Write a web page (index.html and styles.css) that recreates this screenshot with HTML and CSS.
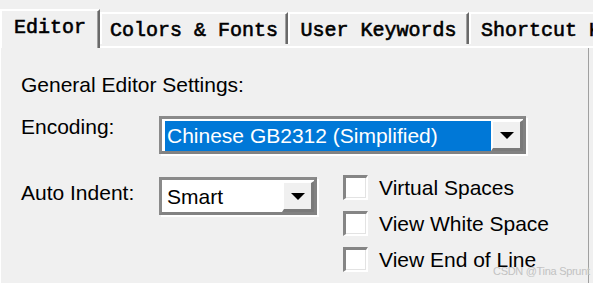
FILE: index.html
```html
<!DOCTYPE html>
<html>
<head>
<meta charset="utf-8">
<link rel="stylesheet" href="styles.css">
</head>
<body>
<div class="dialog">
  <div class="tabs">
    <div class="tab active">Editor</div>
    <div class="tab-rest">
      <div class="tab w-colors">Colors &amp; Fonts</div>
      <div class="tab w-user">User Keywords</div>
      <div class="tab w-short">Shortcut Keys</div>
    </div>
  </div>
  <div class="panel">
    <div class="heading">General Editor Settings:</div>
    <div class="row row-enc">
      <div class="label">Encoding:</div>
      <div class="combo combo-enc">
        <div class="field selected">Chinese GB2312 (Simplified)</div>
        <div class="drop"><span class="arrow"></span></div>
      </div>
    </div>
    <div class="row row-indent">
      <div class="label label-ai">Auto Indent:</div>
      <div class="combo combo-ai">
        <div class="field">Smart</div>
        <div class="drop"><span class="arrow"></span></div>
      </div>
      <div class="checks">
        <div class="check"><span class="box"></span><span class="check-label">Virtual Spaces</span></div>
        <div class="check"><span class="box"></span><span class="check-label">View White Space</span></div>
        <div class="check"><span class="box"></span><span class="check-label">View End of Line</span></div>
      </div>
    </div>
  </div>
  <div class="watermark">CSDN @Tina Sprunt</div>
</div>
</body>
</html>
```
FILE: styles.css
```css
* { box-sizing: border-box; }
html, body { margin: 0; padding: 0; }
body {
  background: #f0f0f0;
  width: 593px;
  height: 283px;
  overflow: hidden;
  font-family: "Liberation Sans", Arial, sans-serif;
  font-size: 21px;
  color: #000;
}
.dialog {
  width: 593px;
  height: 283px;
  overflow: hidden;
  position: relative;
}
.tabs {
  display: flex;
  height: 48px;
}
.tab {
  font-family: "Liberation Mono", "Courier New", monospace;
  font-size: 20px;
  line-height: 20px;
  font-weight: normal;
  -webkit-text-stroke: 0.6px #000;
  white-space: nowrap;
  background: #f0f0f0;
  border-top: 2px solid #fff;
  border-left: 2px solid #fff;
  border-right: 2px solid #696969;
  box-shadow: inset -1px 0 0 #a0a0a0;
  padding-top: 7px;
  text-align: center;
  flex: none;
}
.tab.active {
  width: 100px;
  margin-top: 9px;
  height: 39px;
}
.tab-rest {
  flex: 1;
  min-width: 0;
  display: flex;
  align-items: flex-start;
  padding-top: 12px;
  height: 48px;
  border-bottom: 2px solid #fff;
  overflow: hidden;
}
.tab-rest .tab { height: 32px; }
.w-colors { width: 188px; }
.w-user { width: 181px; }
.w-short {
  width: 200px;
  text-align: left;
  padding-left: 10px;
  border-right: none;
  box-shadow: none;
}
.panel {
  height: 235px;
  width: 589px;
  border-left: 1px solid #fff;
  border-right: 1px solid #a0a0a0;
  padding: 25px 0 0 20px;
}
.heading {
  line-height: 24px;
  height: 24px;
  white-space: nowrap;
}
.row {
  display: flex;
  align-items: flex-start;
}
.row-enc { margin-top: 18px; }
.row-indent { margin-top: 21px; }
.label {
  width: 138px;
  line-height: 24px;
  flex: none;
  white-space: nowrap;
}
.label-ai { margin-top: 6px; }
.combo {
  display: flex;
  flex: none;
  height: 38px;
  border: 3px solid #828282;
  border-top-color: #8a8a8a;
  border-left-color: #8a8a8a;
  box-shadow: 2px 2px 0 #fff;
  background: #fff;
  padding: 2px 0 0 3px;
}
.combo-enc { width: 367px; margin-top: 1px; }
.combo-ai { width: 158px; margin-top: 2px; }
.field {
  flex: 1;
  min-width: 0;
  height: 30px;
  line-height: 30px;
  padding-left: 2px;
  white-space: nowrap;
  overflow: hidden;
}
.field.selected {
  background: #0078d7;
  color: #fff;
}
.drop {
  width: 32px;
  height: 31px;
  margin-top: -1px;
  flex: none;
  background: #f0f0f0;
  border-style: solid;
  border-width: 2px 3px 3px 2px;
  border-color: #fff #7a7a7a #7a7a7a #fff;
  display: flex;
  align-items: center;
  justify-content: center;
}
.arrow {
  width: 0;
  height: 0;
  border-left: 7px solid transparent;
  border-right: 7px solid transparent;
  border-top: 7px solid #000;
  margin-top: 1px;
}
.checks {
  margin-left: 26px;
  display: flex;
  flex-direction: column;
  gap: 11px;
}
.check {
  display: flex;
  align-items: center;
  height: 25px;
}
.box {
  width: 25px;
  height: 25px;
  flex: none;
  background: #fff;
  border-style: solid;
  border-width: 3px 2px 2px 3px;
  border-color: #858585 #fff #fff #858585;
  box-shadow: inset -1px -1px 0 #e3e3e3;
  margin-right: 11px;
}
.check-label {
  line-height: 24px;
  white-space: nowrap;
}
.watermark {
  position: absolute;
  left: 493px;
  top: 265px;
  font-size: 11px;
  line-height: 13px;
  letter-spacing: -0.3px;
  color: #c2c2c2;
  white-space: nowrap;
}
```
